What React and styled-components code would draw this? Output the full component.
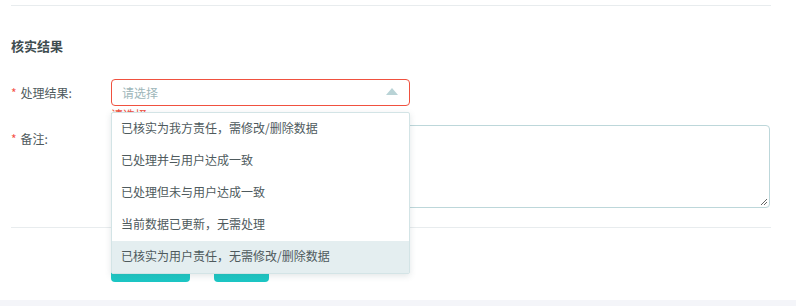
import styled, { createGlobalStyle } from "styled-components";

const Global = createGlobalStyle`
  body {
    margin: 0;
    background: #fff;
    font-family: "Noto Sans CJK SC", "Noto Sans", sans-serif;
  }
`;

const Page = styled.div`
  height: 306px;
  display: flex;
  flex-direction: column;
  overflow: hidden;
`;

const Content = styled.div`
  height: 300px;
  padding: 0 25px 0 11px;
  box-sizing: border-box;
`;

const Divider = styled.div`
  height: 1px;
  background: #e8ecee;
  margin: ${(p) => p.margin || "0"};
`;

const Title = styled.h3`
  margin: 0 0 24px;
  font-size: 13px;
  line-height: 18px;
  font-weight: bold;
  color: #3f4d50;
`;

const Row = styled.div`
  display: flex;
  align-items: ${(p) => (p.top ? "flex-start" : "center")};
  margin-bottom: ${(p) => p.gap || "0"};
`;

const Label = styled.label`
  width: 100px;
  flex: none;
  font-size: 12px;
  line-height: 16px;
  color: #4e5a5d;
  padding-top: ${(p) => (p.top ? "6px" : "0")};
  &::before {
    content: "*";
    color: #f5544a;
    margin-right: 4px;
  }
`;

const Field = styled.div`
  position: relative;
`;

const SelectBox = styled.div`
  width: 299px;
  height: 27px;
  box-sizing: border-box;
  border: 1px solid #f0513f;
  border-radius: 4px;
  display: flex;
  align-items: center;
  justify-content: space-between;
  padding: 0 11px 0 10px;
  font-size: 12px;
  color: #9db6b9;
`;

const Arrow = styled.span`
  width: 0;
  height: 0;
  border-left: 6px solid transparent;
  border-right: 6px solid transparent;
  border-bottom: 7px solid #b9d3d6;
  margin-top: -2px;
`;

const ErrorText = styled.div`
  position: absolute;
  left: 0;
  top: 29px;
  font-size: 12px;
  line-height: 14px;
  color: #f0513f;
`;

const Menu = styled.ul`
  position: absolute;
  left: 0;
  top: 33px;
  z-index: 10;
  width: 299px;
  box-sizing: border-box;
  margin: 0;
  padding: 0;
  list-style: none;
  background: #fff;
  border: 1px solid #d3e4e6;
  border-radius: 2px;
  box-shadow: 0 2px 6px rgba(60, 90, 95, 0.15);
`;

const Option = styled.li`
  height: 32px;
  display: flex;
  align-items: center;
  padding: 0 9px;
  font-size: 12px;
  line-height: 16px;
  padding-bottom: 2px;
  box-sizing: border-box;
  color: #4e5a5d;
  background: ${(p) => (p.active ? "#e4eef0" : "transparent")};
`;

const TextArea = styled.div`
  width: 659px;
  height: 83px;
  box-sizing: border-box;
  border: 1px solid #bdd7da;
  border-radius: 4px;
  position: relative;
`;

const Grip = styled.svg`
  position: absolute;
  right: 1px;
  bottom: 1px;
`;

const Actions = styled.div`
  display: flex;
  gap: 24px;
  padding-left: 100px;
  margin-top: 22px;
`;

const Button = styled.button`
  width: ${(p) => p.w}px;
  height: 32px;
  border: none;
  border-radius: 4px;
  background: linear-gradient(180deg, #24d4cc, #1cc6c4);
  color: #fff;
  font-family: inherit;
  font-size: 12px;
`;

const Band = styled.div`
  flex: 1;
  background: #f4f5f9;
`;

const options = [
  "已核实为我方责任，需修改/删除数据",
  "已处理并与用户达成一致",
  "已处理但未与用户达成一致",
  "当前数据已更新，无需处理",
  "已核实为用户责任，无需修改/删除数据",
];

export default function App() {
  return (
    <Page>
      <Global />
      <Content>
        <Divider margin="5px 0 31px" />
        <Title>核实结果</Title>
        <Row gap="19px">
          <Label>处理结果:</Label>
          <Field>
            <SelectBox>
              请选择
              <Arrow />
            </SelectBox>
            <ErrorText>请选择</ErrorText>
            <Menu>
              {options.map((o, i) => (
                <Option key={o} active={i === options.length - 1}>
                  {o}
                </Option>
              ))}
            </Menu>
          </Field>
        </Row>
        <Row top>
          <Label top>备注:</Label>
          <TextArea>
            <Grip width="9" height="9" viewBox="0 0 9 9">
              <path d="M8 2L2 8M8 5L5 8" stroke="#666" strokeWidth="1" />
            </Grip>
          </TextArea>
        </Row>
        <Divider margin="19px 0 0" />
        <Actions>
          <Button w={79}>提交</Button>
          <Button w={55}>取消</Button>
        </Actions>
      </Content>
      <Band />
    </Page>
  );
}
